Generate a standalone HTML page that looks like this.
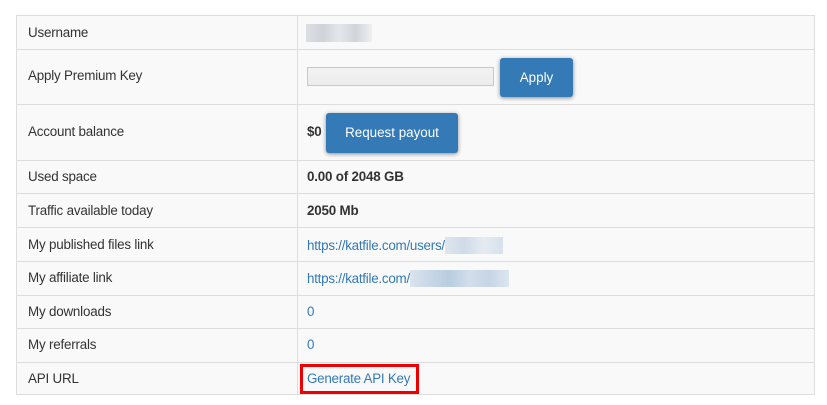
<!DOCTYPE html>
<html><head><style>
body{margin:0;background:#fff;font-family:"Liberation Sans",sans-serif;font-size:13.4px;letter-spacing:-0.2px;color:#333;width:827px;height:405px;overflow:hidden;position:relative}
.t{position:absolute;left:16px;top:15px;width:799px;height:380px;background:#f9f9f9;border:1px solid #ddd;box-sizing:border-box}
.r{position:absolute;left:0;width:100%;border-top:1px solid #ddd;box-sizing:border-box}
.v{position:absolute;left:280px;top:0;bottom:0;border-left:1px solid #ddd}
.l{position:absolute;left:11px}
.c{position:absolute;left:290px;white-space:nowrap}
a{color:#337ab7;text-decoration:none;letter-spacing:-0.25px}
.btn{position:absolute;background:#337ab7;color:#fff;border-radius:3px;box-shadow:0 1px 4px rgba(0,0,0,.45);text-align:center;letter-spacing:0}
.blur{position:absolute;height:18px;background:linear-gradient(90deg,#dcdfe3,#cfd4d9,#e3e6e9,#d1d5d9,#eef0f2)}
.ib{display:inline-block;height:17px;vertical-align:-4px}
</style></head><body>
<div class="t">
<div class="v"></div>
<div class="r" style="top:33px"></div>
<div class="r" style="top:88px"></div>
<div class="r" style="top:144px"></div>
<div class="r" style="top:177px"></div>
<div class="r" style="top:211px"></div>
<div class="r" style="top:245px"></div>
<div class="r" style="top:279px"></div>
<div class="r" style="top:312px"></div>
<div class="r" style="top:346px"></div>

<div class="l" style="top:9px">Username</div>
<div class="blur" style="left:289px;top:8px;width:66px"></div>

<div class="l" style="top:52px">Apply Premium Key</div>
<div style="position:absolute;left:290px;top:51px;width:187px;height:19px;border:1px solid #c8c8c8;background:linear-gradient(#f2f2f2,#ececec);box-sizing:border-box"></div>
<div class="btn" style="left:483px;top:42px;width:73px;height:39px;line-height:39px">Apply</div>

<div class="l" style="top:108px">Account balance</div>
<div class="c" style="top:108px;font-weight:bold">$0</div>
<div class="btn" style="left:309px;top:97px;width:132px;height:40px;line-height:40px">Request payout</div>

<div class="l" style="top:153px">Used space</div>
<div class="c" style="top:153px;font-weight:bold">0.00 of 2048 GB</div>

<div class="l" style="top:187px">Traffic available today</div>
<div class="c" style="top:187px;font-weight:bold">2050 Mb</div>

<div class="l" style="top:221px">My published files link</div>
<div class="c" style="top:221px"><a>https://katfile.com/users/</a><span class="ib" style="width:58px;background:linear-gradient(90deg,#dfe6ee,#cfdbe8,#e5ebf1,#d7e1ec)"></span></div>

<div class="l" style="top:254px">My affiliate link</div>
<div class="c" style="top:254px"><a>https://katfile.com/</a><span class="ib" style="width:99px;background:linear-gradient(90deg,#dbe4ee,#c8d7e6,#b9cde2,#d2deea,#c6d5e5,#dde6ef)"></span></div>

<div class="l" style="top:288px">My downloads</div>
<div class="c" style="top:288px"><a>0</a></div>

<div class="l" style="top:321px">My referrals</div>
<div class="c" style="top:321px"><a>0</a></div>

<div class="l" style="top:355px">API URL</div>
<div style="position:absolute;left:283px;top:348px;width:119px;height:30px;border:3px solid #e00;box-sizing:border-box"></div>
<div class="c" style="top:355px"><a>Generate API Key</a></div>
</div>
</body></html>
